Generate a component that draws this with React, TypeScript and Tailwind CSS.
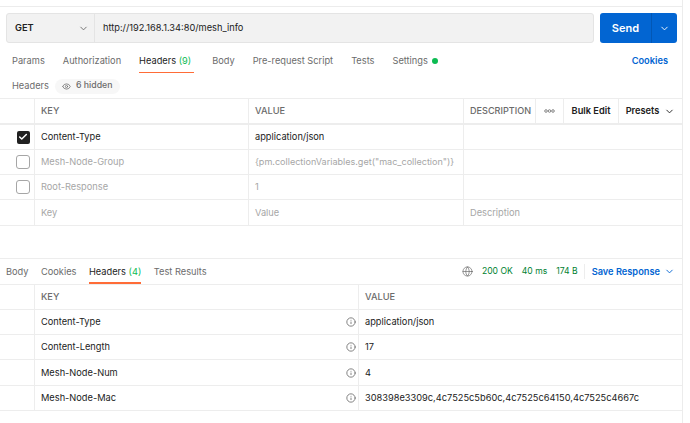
import { ChevronDown, Eye, Globe, Info, Check } from 'lucide-react';

const reqTabs = ['Params', 'Authorization', 'Headers', 'Body', 'Pre-request Script', 'Tests', 'Settings'];
const resHeaders = [
  ['Content-Type', 'application/json'],
  ['Content-Length', '17'],
  ['Mesh-Node-Num', '4'],
  ['Mesh-Node-Mac', '308398e3309c,4c7525c5b60c,4c7525c64150,4c7525c4667c'],
];

const reqCols = 'grid grid-cols-[34px_214px_215px_1fr] h-[25px] border-b border-[#ededed] items-stretch';
const resCols = 'grid grid-cols-[34px_324px_1fr] border-b border-[#ededed] items-stretch';
const cell = 'border-l border-[#ededed] flex items-center pl-[6px]';

function Box({ checked }: { checked?: boolean }) {
  if (checked) {
    return (
      <span className="w-[13px] h-[13px] rounded-[2px] bg-[#212121] flex items-center justify-center">
        <Check size={10} strokeWidth={3.5} className="text-white" />
      </span>
    );
  }
  return <span className="w-[14px] h-[14px] rounded-[3px] border border-[#a6a6a6] bg-white" />;
}

export default function App() {
  return (
    <div className="w-[690px] h-[423px] bg-white overflow-hidden text-[9.25px] text-[#212121] font-['Inter',sans-serif]">
      <div className="w-[683px] h-[423px] border-r border-[#ececec]">
        <div className="h-[7px] border-b border-[#ececec]" />
        <div className="flex gap-[6px] pl-[6px] pt-[6px]">
          <div className="w-[588px] h-[30px] flex bg-[#f2f2f2] border border-[#e4e4e4] rounded-[3px]">
            <div className="w-[88px] border-r border-[#e4e4e4] flex items-center justify-between pl-[8px] pr-[5px] font-semibold text-[#212121]">
              GET
              <ChevronDown size={11} className="text-[#6b6b6b]" />
            </div>
            <div className="flex items-center pl-[8px] text-[#212121]">http://192.168.1.34:80/mesh_info</div>
          </div>
          <div className="w-[77px] h-[30px] flex bg-[#0265d2] rounded-[3px] text-white text-[11px] font-semibold">
            <div className="w-[52px] flex items-center justify-center border-r border-[#0257b5]">Send</div>
            <div className="flex-1 flex items-center justify-center">
              <ChevronDown size={11} />
            </div>
          </div>
        </div>

        <div className="h-[36px] flex items-center justify-between pl-[12px] pr-[14px]">
          <div className="flex gap-[18px] text-[#6b6b6b]">
            {reqTabs.map((t) => (
              <div key={t} className={t === 'Headers' ? 'relative text-[#212121] mr-[3px]' : 'relative'}>
                {t}
                {t === 'Headers' && <span className="text-[#0cbb52]"> (9)</span>}
                {t === 'Headers' && <span className="absolute left-0 right-[-3px] top-[18px] h-[1px] bg-[#ff6c37]" />}
                {t === 'Settings' && <span className="absolute right-[-10px] top-[4px] w-[6px] h-[6px] rounded-full bg-[#0cbb52]" />}
              </div>
            ))}
          </div>
          <div className="text-[#0265d2] font-semibold">Cookies</div>
        </div>

        <div className="h-[19px] flex items-center gap-[6px] pl-[12px] pb-[5px]">
          <span className="text-[#6b6b6b]">Headers</span>
          <span className="h-[15px] px-[7px] rounded-full bg-[#f7f7f7] flex items-center gap-[5px] text-[#6b6b6b] font-medium text-[8.75px]">
            <Eye size={9} />6 hidden
          </span>
        </div>

        <div className="border-t border-[#ededed]">
          <div className="grid grid-cols-[34px_214px_215px_72px_28px_55px_1fr] h-[26px] border-b-2 border-[#ededed] font-medium text-[#6b6b6b]">
            <div />
            <div className={cell}>KEY</div>
            <div className={cell}>VALUE</div>
            <div className={cell + ' text-[9.1px]'}>DESCRIPTION</div>
            <div className="border-l border-[#ededed] flex items-center justify-center">
              <svg width="11" height="4" viewBox="0 0 11 4" fill="none" stroke="#6b6b6b" strokeWidth="0.8">
                <circle cx="2" cy="2" r="1.3" />
                <circle cx="5.5" cy="2" r="1.3" />
                <circle cx="9" cy="2" r="1.3" />
              </svg>
            </div>
            <div className="border-l border-[#ededed] flex items-center justify-center font-semibold text-[#212121]">Bulk Edit</div>
            <div className="border-l border-[#ededed] flex items-center justify-center gap-[5px] font-semibold text-[#212121]">
              Presets <ChevronDown size={11} />
            </div>
          </div>
          <div className={reqCols}>
            <div className="flex items-center justify-center pl-[13px] pr-[1px]"><Box checked /></div>
            <div className={cell}>Content-Type</div>
            <div className={cell}>application/json</div>
            <div className={cell} />
          </div>
          <div className={reqCols + ' text-[#a6a6a6]'}>
            <div className="flex items-center justify-center pl-[13px] pr-[1px]"><Box /></div>
            <div className={cell}>Mesh-Node-Group</div>
            <div className={cell + ' text-[9.05px]'}>{'{pm.collectionVariables.get("mac_collection")}'}</div>
            <div className={cell} />
          </div>
          <div className={reqCols + ' text-[#a6a6a6]'}>
            <div className="flex items-center justify-center pl-[13px] pr-[1px]"><Box /></div>
            <div className={cell}>Root-Response</div>
            <div className={cell}>1</div>
            <div className={cell} />
          </div>
          <div className={reqCols + ' text-[#a6a6a6] h-[26px]'}>
            <div />
            <div className={cell}>Key</div>
            <div className={cell}>Value</div>
            <div className={cell}>Description</div>
          </div>
        </div>

        <div className="mt-[32px] border-t border-[#ededed] h-[26px] flex items-center justify-between pl-[6px] pr-[7px]">
          <div className="flex gap-[12.5px] text-[#6b6b6b]">
            <div>Body</div>
            <div>Cookies</div>
            <div className="relative text-[#212121]">
              Headers <span className="text-[#0cbb52]">(4)</span>
              <span className="absolute left-0 right-0 top-[17px] h-[2px] bg-[#ff6c37]" />
            </div>
            <div>Test Results</div>
          </div>
          <div className="flex items-center text-[#007f31]">
            <Globe size={11} className="text-[#6b6b6b] mr-[9px]" strokeWidth={1.5} />
            <span className="text-[8.6px]">200 OK</span>
            <span className="text-[8.6px] ml-[9px]">40 ms</span>
            <span className="text-[8.6px] ml-[9px]">174 B</span>
            <span className="ml-[6px] mr-[7px] h-[15px] border-l border-[#ededed]" />
            <span className="text-[#0265d2] font-semibold">Save Response</span>
            <ChevronDown size={11} className="text-[#0265d2] ml-[4px]" />
          </div>
        </div>

        <div className="border-t border-[#ededed]">
          <div className={resCols + ' h-[25px] font-medium text-[#6b6b6b]'}>
            <div />
            <div className={cell}>KEY</div>
            <div className={cell}>VALUE</div>
          </div>
          {resHeaders.map(([k, v], i) => (
            <div key={k} className={resCols + (i === 2 ? ' h-[26px]' : ' h-[25px]')}>
              <div />
              <div className={cell + ' justify-between pr-[2px]'}>
                {k}
                <Info size={10} className="text-[#6b6b6b]" />
              </div>
              <div className={cell}>{v}</div>
            </div>
          ))}
        </div>
      </div>
    </div>
  );
}
